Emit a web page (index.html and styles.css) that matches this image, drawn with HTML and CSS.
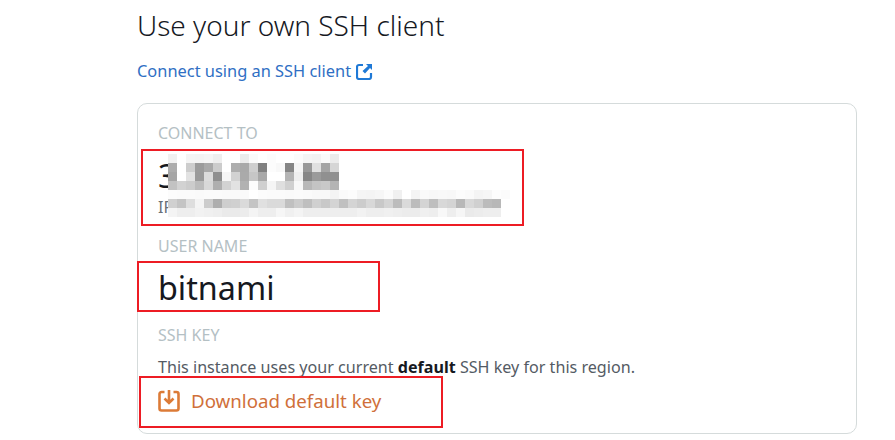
FILE: index.html
```html
<!DOCTYPE html>
<html>
<head>
    <meta charset="UTF-8">
    <title>Use your own SSH client</title>
    <link rel="stylesheet" href="styles.css">
</head>
<body>
    <div class="page">
        <h1>Use your own SSH client</h1>
        <a class="doc-link" href="#">Connect using an SSH client
            <svg class="link-icon" viewBox="0 0 17 17" width="17" height="17">
                <path d="M7 2H3a2 2 0 0 0-2 2v10a2 2 0 0 0 2 2h10a2 2 0 0 0 2-2v-4" fill="none" stroke="#1f79d6" stroke-width="2.200"/>
                <path d="M10 1h6v6l-2-2-5 5.500-2.500-2.500L12 3z" fill="#1f79d6"/>
            </svg>
        </a>
        <div class="card">
            <div class="label">CONNECT TO</div>
            <div class="value value-ip">3</div>
            <div class="note">IP</div>
            <div class="label label-user">USER NAME</div>
            <div class="value value-user">bitnami</div>
            <div class="label label-key">SSH KEY</div>
            <p class="key-text">This instance uses your current <b>default</b> SSH key for this region.</p>
            <a class="download" href="#">
                <svg viewBox="0 0 22 22" width="22" height="22">
                    <path d="M6.500 2H3.500a2 2 0 0 0-2 2v14.500a2 2 0 0 0 2 2h15a2 2 0 0 0 2-2V4a2 2 0 0 0-2-2h-3" fill="none" stroke="#dc7b37" stroke-width="2.600"/>
                    <path d="M11 0v12.500M6.500 8.500l4.500 4.500 4.500-4.500" fill="none" stroke="#dc7b37" stroke-width="2.600"/>
                </svg>
                <span>Download default key</span>
            </a>
        </div>
        <svg class="mosaic" id="mosaic" width="360" height="70" shape-rendering="crispEdges"></svg>
        <div class="mark mark-ip"></div>
        <div class="mark mark-user"></div>
        <div class="mark mark-key"></div>
    </div>

    <script>
        // grey level of each blurred cell, one string per row
        const rows = [
            'f0 ff f4 f3 f5 ee ff ff eb fa ff fc ff ff fb f4 f2 fa ec',
            'ac ff cd 9b a9 cc ff ae a9 ce 80 fc f8 85 f4 98 e0 a5 d6',
            'a5 ff e2 9a dc 8f f6 d2 aa c6 a8 ff ff b4 ee 86 9a 90 90',
            'c2 d2 cc bc d8 af d2 e2 b2 fc cf f5 df d0 f8 b8 c4 c8 b4',
            'fc fb fb fa fb fb fa fa fa ff fc fb fb fa fb fa f8 f8 f4 fa fc f5 f4 f6 fb f0 ff f4 fa f8 f9 f8 fc fa f4 f6 fd fb',
            'd0 c4 de f4 cc ae ce d0 da c4 e0 da da c0 cc bf d0 c8 d4 c0 d4 cc d8 c8 d4 bc da bc d4 be d8 d4 b8 d8 d0 bc b8',
            'f4 ee ee f2 f0 ee ea ea ec f4 ee ee f6 f0 f4 ee ee ee ee ee ee f2 ee ee f0 ee ec ec f0 ee f8 ee f6 ea ec ee ee'
        ];
        const svg = document.getElementById('mosaic');
        rows.forEach(function(row, y) {
            row.split(' ').forEach(function(grey, x) {
                const cell = document.createElementNS('http://www.w3.org/2000/svg', 'rect');
                cell.setAttribute('x', x * 9);
                cell.setAttribute('y', y * 9);
                cell.setAttribute('width', 9);
                cell.setAttribute('height', 9);
                cell.setAttribute('fill', '#' + grey + grey + grey);
                svg.appendChild(cell);
            });
        });
    </script>
</body>
</html>
```
FILE: styles.css
```css
body {
    margin: 0;
    font-family: "Noto Sans", Arial, sans-serif;
    background-color: white;
    color: #16191f;
}
.page {
    position: relative;
    height: 440px;
    overflow: hidden;
    padding-left: 137px;
}
h1 {
    margin: 0;
    padding-top: 6px;
    font-size: 28px;
    line-height: 38px;
    font-weight: 300;
    color: #16191f;
}
.doc-link {
    display: flex;
    align-items: center;
    gap: 5px;
    margin-top: 16px;
    font-size: 16.400px;
    line-height: 22px;
    color: #2f6fc4;
    text-decoration: none;
}
.card {
    box-sizing: border-box;
    width: 720px;
    height: 331px;
    margin-top: 21px;
    padding: 18px 20px;
    border: 1px solid #d5dbdb;
    border-radius: 10px;
}
.label {
    font-size: 16px;
    line-height: 22px;
    color: #b4c0c4;
}
.value {
    font-size: 32.300px;
    line-height: 44px;
}
.value-ip {
    margin-top: 9px;
}
.note {
    font-size: 16px;
    line-height: 20px;
    color: #687078;
}
.label-user {
    margin-top: 18px;
}
.value-user {
    margin-top: 8px;
}
.label-key {
    margin-top: 15px;
}
.key-text {
    margin: 10px 0 0;
    font-size: 16.130px;
    line-height: 22px;
    color: #545b64;
}
.key-text b {
    color: #16191f;
}
.download {
    display: flex;
    align-items: center;
    gap: 11px;
    margin-top: 11px;
    font-size: 18.700px;
    line-height: 24px;
    color: #d0703a;
    text-decoration: none;
}
.mosaic {
    position: absolute;
    left: 168px;
    top: 154px;
}
.mark {
    position: absolute;
    box-sizing: border-box;
    border: 2px solid #ed1c24;
}
.mark-ip {
    left: 141px;
    top: 149px;
    width: 383px;
    height: 77px;
}
.mark-user {
    left: 137px;
    top: 261px;
    width: 243px;
    height: 51px;
}
.mark-key {
    left: 139px;
    top: 376px;
    width: 304px;
    height: 52px;
}
```
